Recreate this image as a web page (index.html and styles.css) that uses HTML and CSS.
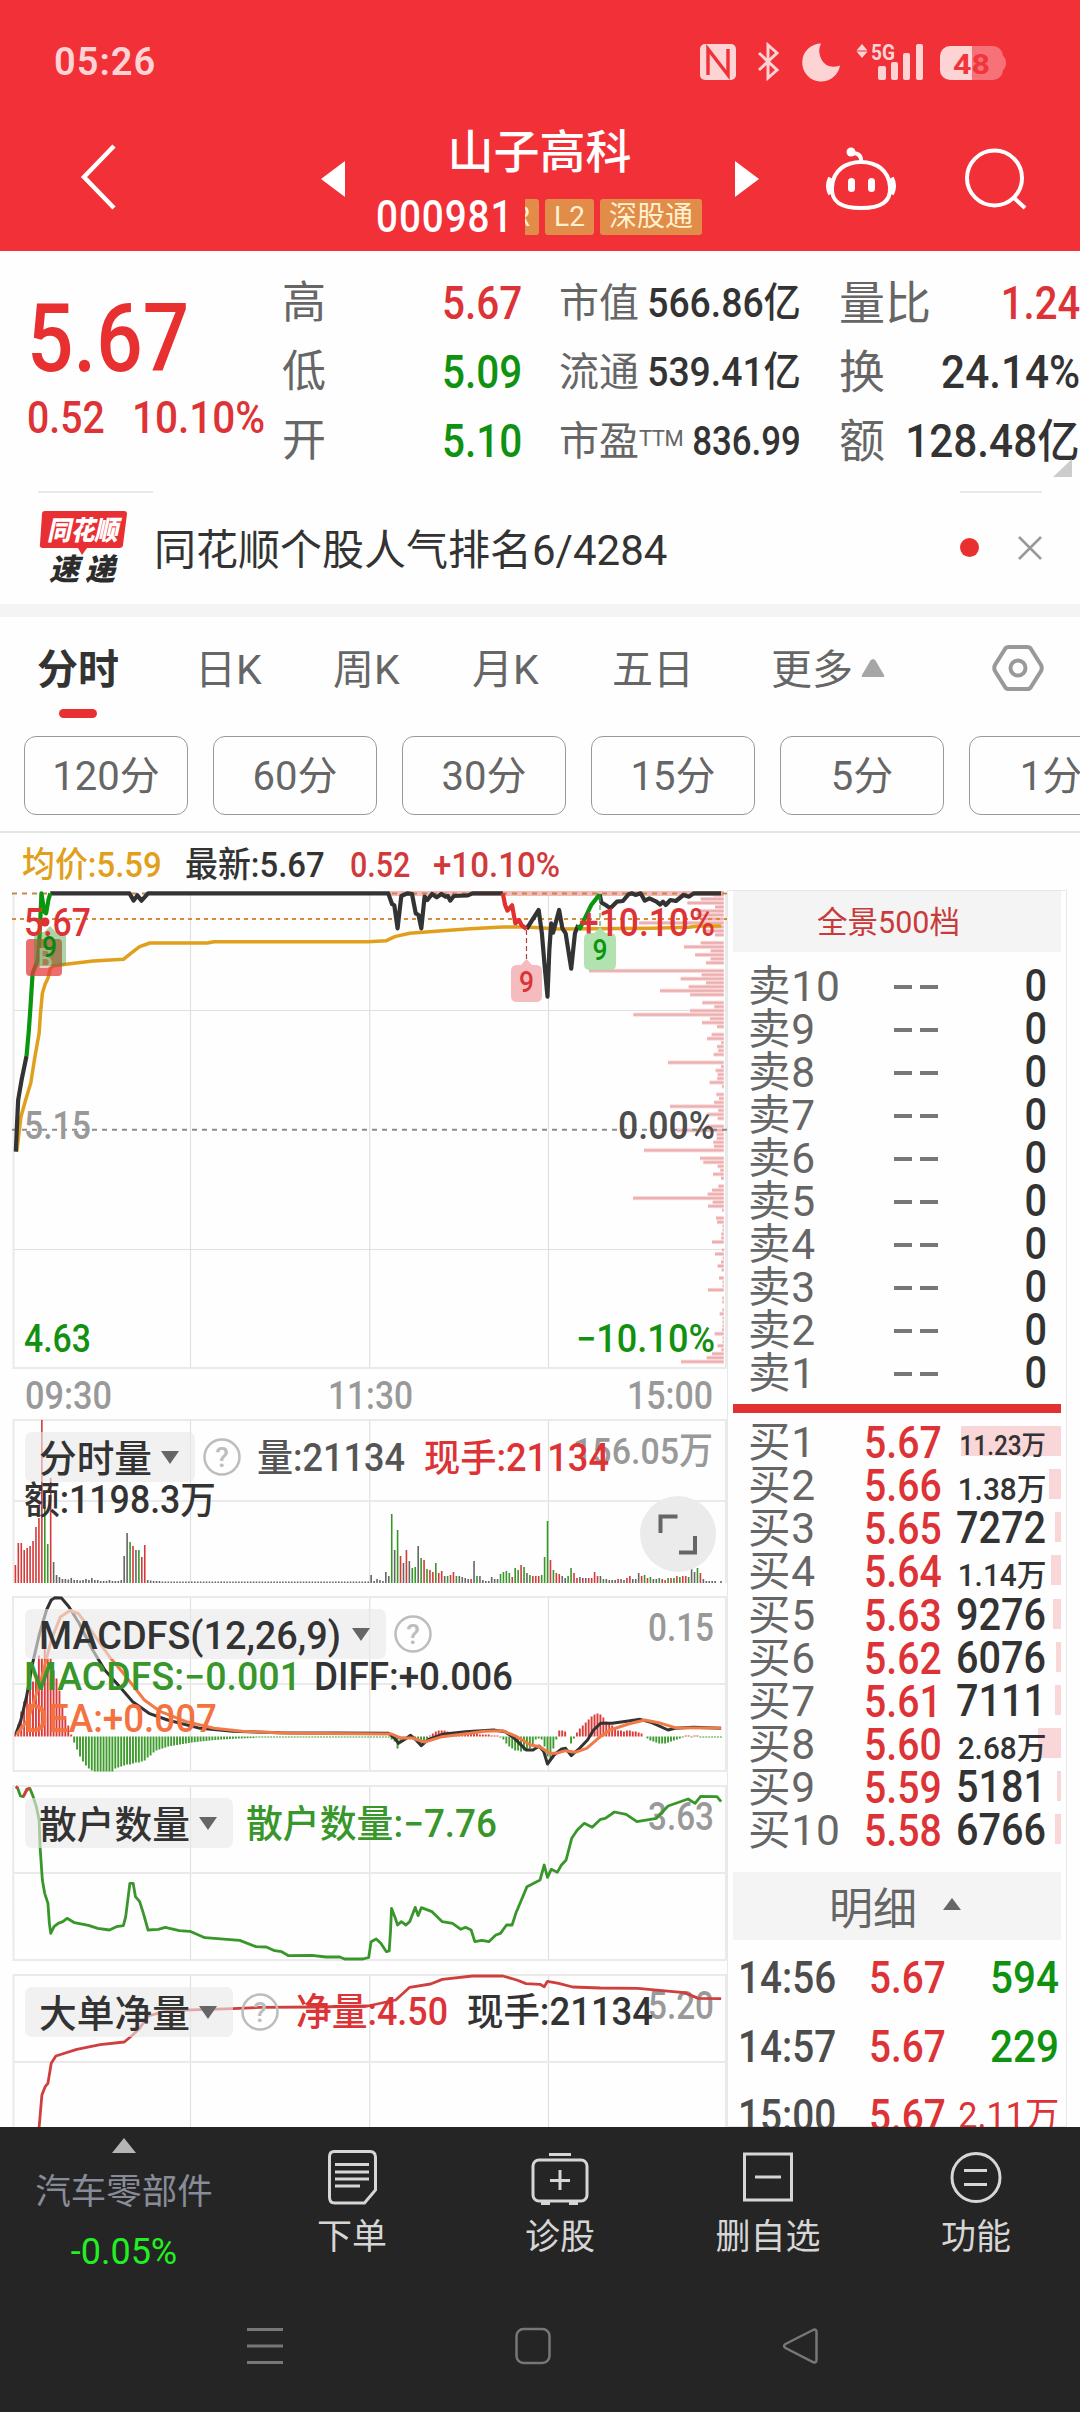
FILE: index.html
```html
<!DOCTYPE html>
<html lang="zh-CN">
<head>
<meta charset="utf-8">
<title>山子高科 000981</title>
<link rel="stylesheet" href="styles.css">
</head>
<body>
<header class="top">
  <div class="status">
    <span class="clock">05:26</span>
    <svg class="status-icons" width="310" height="44" viewBox="698 40 310 44">
      <g fill="#fdd3d4">
        <rect x="700" y="44" width="36" height="36" rx="5"/>
        <path d="M708 75V49L728 75V49" fill="none" stroke="#f13038" stroke-width="3.4"/>
        <path d="M759 53l18 17-9 8V45l9 8-18 17" fill="none" stroke="#fdd3d4" stroke-width="3"/>
        <path d="M821 43.500a19 19 0 1 0 19 22q-12 4-18-5-5-9-1-17z"/>
        <path d="M862 44l5.500 6.500h-11zM862 58l5.500-6.500h-11z"/>
        <rect x="878" y="66" width="8" height="14" rx="2"/><rect x="891" y="62" width="7" height="18" rx="2"/>
        <rect x="903" y="53" width="7" height="27" rx="2"/><rect x="916" y="44" width="7" height="36" rx="2"/>
        <text x="871" y="60" class="g5" textLength="24" lengthAdjust="spacingAndGlyphs">5G</text>
        <path d="M950 46h22v34h-22a10 10 0 0 1-10-10V56a10 10 0 0 1 10-10z"/>
        <path d="M972 46h21a10 10 0 0 1 10 10q3 2 3 7t-3 7a10 10 0 0 1-10 10h-21z" fill="#f67178"/>
        <text x="953" y="74" class="batt" textLength="37" lengthAdjust="spacingAndGlyphs">48</text>
      </g>
    </svg>
  </div>
  <div class="titlebar">
    <svg class="back" width="40" height="70" viewBox="0 0 40 70"><path d="M35 4L5 35l30 31" fill="none" stroke="#fff" stroke-width="4.500"/></svg>
    <svg class="prev" width="24" height="36" viewBox="0 0 24 36"><path d="M0 18L24 0v36z" fill="#fff"/></svg>
    <div class="name">
      <h1>山子高科</h1>
      <div class="code"><span class="din digits">000981</span><i class="tag cut">R</i><i class="tag l2">L2</i><i class="tag sgt">深股通</i></div>
    </div>
    <svg class="next" width="24" height="36" viewBox="0 0 24 36"><path d="M24 18L0 0v36z" fill="#fff"/></svg>
    <svg class="robot" width="70" height="66" viewBox="826 145 70 66">
      <g fill="none" stroke="#fff" stroke-width="4">
        <path d="M861 161c15 0 28 8 29 25 1 15-9 21-29 21s-30-6-29-21c1-17 14-25 29-25z"/>
        <path d="M861 161q1-9-9-9"/><path d="M831 177q-4 8 0 16M891 177q4 8 0 16" stroke-width="6"/>
      </g>
      <g fill="#fff"><circle cx="851" cy="151" r="4.500"/><rect x="848" y="177" width="7" height="14" rx="3.500"/><rect x="868" y="177" width="7" height="14" rx="3.500"/></g>
    </svg>
    <svg class="search" width="64" height="64" viewBox="963 146 64 64"><g fill="none" stroke="#fff" stroke-width="4"><circle cx="994.500" cy="177" r="27.500"/><path d="M1013 196l12 11"/></g></svg>
  </div>
</header>

<section class="quote">
  <div class="last">
    <b class="din">5.67</b>
    <p><span class="din">0.52</span><span class="din pct">10.10%</span></p>
  </div>
  <dl class="c2">
    <div><dt>高</dt><dd class="din red">5.67</dd></div>
    <div><dt>低</dt><dd class="din green">5.09</dd></div>
    <div><dt>开</dt><dd class="din green">5.10</dd></div>
  </dl>
  <dl class="c3">
    <div><dt>市值</dt><dd class="din">566.86亿</dd></div>
    <div><dt>流通</dt><dd class="din">539.41亿</dd></div>
    <div><dt>市盈<sup>TTM</sup></dt><dd class="din pe">836.99</dd></div>
  </dl>
  <dl class="c4">
    <div><dt>量比</dt><dd class="din ratio red">1.24</dd></div>
    <div><dt>换</dt><dd class="din">24.14%</dd></div>
    <div><dt>额</dt><dd class="din">128.48亿</dd></div>
  </dl>
  <i class="corner"></i>
</section>
<div class="hairs"><i></i><i></i></div>

<section class="news">
  <svg class="logo" width="92" height="78" viewBox="38 508 92 78">
    <path d="M45 511h79q3 0 3 3l-4 31q0 3-4 3H87l-5 7-4-7H43q-4 0-3-4l2-30q0-3 3-3z" fill="#e83034"/>
    <text x="47" y="540" class="logo-a" textLength="71" lengthAdjust="spacingAndGlyphs">同花顺</text>
    <text x="49" y="580" class="logo-b" textLength="66" lengthAdjust="spacing">速递</text>
  </svg>
  <span class="headline">同花顺个股人气排名6/4284</span>
  <i class="dot"></i>
  <svg class="close" width="26" height="26" viewBox="0 0 26 26"><path d="M2 2l22 22M24 2L2 24" stroke="#999" stroke-width="2.500"/></svg>
</section>

<nav class="tabs">
  <a class="on">分时</a><a>日K</a><a>周K</a><a>月K</a><a>五日</a>
  <a>更多<svg width="24" height="20" viewBox="0 0 24 20"><path d="M12 1q1.500 0 2.500 1.500L23 17q1 2-1 2H2q-2 0-1-2L9.500 2.500Q10.500 1 12 1z" fill="#a6a6a6"/></svg></a>
  <svg class="gear" width="52" height="50" viewBox="992 643 52 50"><g fill="none" stroke="#999" stroke-width="4"><path d="M1009 647h18q3 0 4 2l10 16q1.500 3 0 6l-10 16q-1 2-4 2h-18q-3 0-4-2l-10-16q-1.500-3 0-6l10-16q1-2 4-2z"/><circle cx="1018" cy="668" r="7.500"/></g></svg>
</nav>
<div class="periods"><a>120分</a><a>60分</a><a>30分</a><a>15分</a><a>5分</a><a>1分</a></div>

<main class="board">
  <div class="charts">
    <div class="info"><span class="avg">均价:5.59</span><span class="cur">最新:5.67</span><span class="chg">0.52</span><span class="rate">+10.10%</span></div>

    <svg class="chart" width="727" height="520" viewBox="0 890 727 520">
      <g class="grid"><path d="M190.500 893V1368M369.700 893V1368M548.500 893V1368M13 1010.500H727M13 1249.500H727"/><path class="frame" d="M13.500 893V1368H726V893"/></g>
      <rect x="388" y="891" width="336" height="5" fill="#f6b9b7"/>
      <g id="profile"></g>
      <path d="M12 893.500H727" stroke="#c08a4c" stroke-width="2" stroke-dasharray="5 5"/>
      <path d="M12 919H727" stroke="#d98a3c" stroke-width="2.200" stroke-dasharray="4 4"/>
      <path d="M12 1129.700H727" stroke="#8c8c8c" stroke-width="2" stroke-dasharray="5 5"/>
      <g class="curve" transform="translate(0 870) scale(.46555 .33333)">
        <polyline stroke="#e0a01c" stroke-width="3.500" points="36,845 45,740 55,690 66,640 75,560 84,490 87,430 91,370 97,342 103,325 108,295 115,287 150,281 200,273 265,268 283,248 300,230 322,219 445,219 460,215 790,215 830,212 848,200 880,190 950,182 1010,176 1080,171 1131,171 1200,177 1400,175 1480,172 1500,168 1549,168"/>
        <g stroke-width="4.200" stroke="#333">
        <polyline points="34,845 36,780 39,690 47,625 57,558"/>
        <polyline points="108,70 278,70 287,92 295,76 304,92 318,70 834,70 842,102 847,106 854,175 862,78 875,70 885,72 893,130 899,135 905,175 912,80 918,90 928,72 938,82 948,72 957,80 962,78 967,92 975,78 1005,76 1015,70 1080,70"/>
        <polyline points="1131,177 1157,120 1164,190 1170,290 1176,380 1180,240 1184,160 1188,188 1201,120 1208,175 1215,190 1227,296 1235,190 1242,165"/>
        <polyline points="1288,73 1292,98 1301,105 1311,115 1325,95 1338,93 1350,73 1358,70 1365,75 1376,70 1385,92 1395,85 1410,95 1418,104 1424,95 1430,105 1440,90 1452,93 1468,75 1480,80 1490,70 1549,70"/>
        <g stroke="#0a960e"><polyline points="57,558 62,480 66,400 70,310 82,268 86,170 89,70 95,125 99,130 104,90 108,70"/><polyline points="1242,165 1246,175 1258,140 1270,105 1288,73"/></g>
        <polyline stroke="#e03030" points="1080,70 1085,105 1090,122 1100,106 1107,160 1115,150 1120,165 1131,177"/>
        </g>
      </g>
      <circle cx="45" cy="922" r="4.500" fill="#e03030"/>
      <path d="M526.500 930V960" stroke="#b04040" stroke-width="1.200" stroke-dasharray="5 3"/>
      <path d="M600 897V927" stroke="#58a058" stroke-width="1.200" stroke-dasharray="5 3"/>
      <rect x="26" y="939" width="36" height="37" rx="4" fill="#e43c3c" opacity=".75"/>
      <text x="38" y="968" fill="#e8d0c8" font-size="27" textLength="15" lengthAdjust="spacingAndGlyphs">B</text>
      <path d="M38 932h6l6-6 6 6h6q4 0 4 4v26q0 4-4 4H38q-4 0-4-4v-26q0-4 4-4z" fill="#3d9a35" opacity=".42"/>
      <text x="42" y="957" fill="#0a860e" font-size="30" textLength="15" lengthAdjust="spacingAndGlyphs">9</text>
      <path d="M517 965h4l5.500-6 5.500 6h4q6 0 6 6v25q0 6-6 6h-19q-6 0-6-6v-25q0-6 6-6z" fill="#f4bcbe"/>
      <text x="519" y="992" fill="#dc3336" font-size="30" textLength="15" lengthAdjust="spacingAndGlyphs">9</text>
      <path d="M590 933h4.500l5.500-6 5.500 6h4.500q6 0 6 6v25q0 6-6 6h-20q-6 0-6-6v-25q0-6 6-6z" fill="#ade0ab" opacity=".95"/>
      <text x="592.500" y="960" fill="#0a960e" font-size="30" textLength="15" lengthAdjust="spacingAndGlyphs">9</text>
      <g font-size="38">
        <text x="24" y="935.500" fill="#dd3336" textLength="67" lengthAdjust="spacingAndGlyphs">5.67</text>
        <text x="579" y="935.500" fill="#dd3336" textLength="136" lengthAdjust="spacingAndGlyphs">+10.10%</text>
        <text x="24" y="1138.500" fill="#999" textLength="67" lengthAdjust="spacingAndGlyphs">5.15</text>
        <text x="618" y="1138.500" fill="#4d4d4d" textLength="97" lengthAdjust="spacingAndGlyphs">0.00%</text>
        <text x="24" y="1351.500" fill="#12900f" textLength="67" lengthAdjust="spacingAndGlyphs">4.63</text>
        <text x="576" y="1351.500" fill="#12900f" textLength="139" lengthAdjust="spacingAndGlyphs">−10.10%</text>
        <g fill="#999"><text x="25" y="1409" textLength="87" lengthAdjust="spacingAndGlyphs">09:30</text><text x="328" y="1409" textLength="85" lengthAdjust="spacingAndGlyphs">11:30</text><text x="627" y="1409" textLength="86" lengthAdjust="spacingAndGlyphs">15:00</text></g>
      </g>
    </svg>

    <svg class="chart" width="727" height="180" viewBox="0 1410 727 180">
      <g class="grid"><path d="M190.500 1420V1583M369.700 1420V1583M548.500 1420V1583"/><path class="frame" d="M13.500 1583V1420H727M726 1420V1583M13 1501H727"/></g>
      <text x="573" y="1464" font-size="37" fill="#999" textLength="140" lengthAdjust="spacingAndGlyphs">156.05万</text>
      <g id="volume"></g>
      <rect class="pill" x="25" y="1432" width="170" height="50" rx="7"/>
      <g font-size="38">
        <text x="39" y="1472" fill="#333" textLength="113" lengthAdjust="spacingAndGlyphs">分时量</text>
        <text x="257" y="1471" fill="#555" textLength="148" lengthAdjust="spacingAndGlyphs">量:21134</text>
        <text x="424" y="1471" fill="#dd3336" textLength="185" lengthAdjust="spacingAndGlyphs">现手:21134</text>
        <text x="24" y="1513" fill="#333" textLength="192" lengthAdjust="spacingAndGlyphs">额:1198.3万</text>
      </g>
      <path class="drop" d="M161 1451h18l-9 13z"/>
      <g class="help"><circle cx="222" cy="1457" r="17.500"/><text x="222" y="1467" text-anchor="middle">?</text></g>
      <circle cx="678" cy="1534" r="38" fill="#ebebeb"/>
      <path d="M660.500 1533v-16.500h17M695 1536v16.500h-16" fill="none" stroke="#666" stroke-width="4"/>
    </svg>

    <svg class="chart" width="727" height="190" viewBox="0 1590 727 190">
      <g class="grid"><path d="M190.500 1597V1771M369.700 1597V1771M548.500 1597V1771"/><path class="frame" d="M13 1597H726V1771H13.500zM13 1684H727"/></g>
      <g id="macd"></g>
      <g class="curve" stroke-width="3" transform="translate(0 1400) scale(.46555 .33333)">
        <polyline stroke="#333" points="34,1002 45,960 57,890 70,790 85,700 100,630 110,600 118,593 132,594 148,620 170,670 195,740 225,810 260,865 285,905 320,940 360,960 430,985 500,994 600,998 835,1000 848,1015 856,1030 870,1018 882,1006 895,1022 905,1037 920,1018 950,1003 1000,995 1060,990 1085,995 1105,1015 1130,1050 1145,1050 1158,1038 1168,1055 1176,1092 1190,1065 1205,1048 1215,1045 1227,1067 1245,1045 1262,1020 1275,990 1290,970 1315,970 1350,963 1375,958 1400,968 1435,990 1450,985 1490,982 1549,985"/>
        <polyline stroke="#f07a48" points="36,1002 60,960 90,830 110,720 130,650 150,632 168,640 195,690 235,770 265,820 310,900 345,935 400,965 460,985 520,994 620,1000 840,1002 860,1014 885,1014 912,1026 950,1010 1010,1000 1040,994 1080,992 1110,1010 1140,1035 1160,1040 1180,1060 1195,1060 1215,1052 1235,1057 1260,1045 1285,1015 1310,990 1350,972 1385,960 1420,970 1450,983 1549,984"/>
      </g>
      <rect class="pill" x="25" y="1609" width="361" height="50" rx="7"/>
      <g font-size="38">
        <text x="39" y="1649" fill="#333" textLength="302" lengthAdjust="spacingAndGlyphs">MACDFS(12,26,9)</text>
        <text x="24" y="1690" fill="#38962a" textLength="277" lengthAdjust="spacingAndGlyphs">MACDFS:−0.001</text>
        <text x="314" y="1690" fill="#333" textLength="199" lengthAdjust="spacingAndGlyphs">DIFF:+0.006</text>
        <text x="24" y="1732" fill="#f37240" textLength="193" lengthAdjust="spacingAndGlyphs">DEA:+0.007</text>
        <text x="648" y="1641" fill="#999" textLength="66" lengthAdjust="spacingAndGlyphs">0.15</text>
      </g>
      <path class="drop" d="M352 1628h18l-9 13z"/>
      <g class="help"><circle cx="413" cy="1634" r="17.500"/><text x="413" y="1644" text-anchor="middle">?</text></g>
    </svg>

    <svg class="chart" width="727" height="188" viewBox="0 1780 727 188">
      <g class="grid"><path d="M190.500 1786V1960M369.700 1786V1960M548.500 1786V1960"/><path class="frame" d="M13 1786H726V1960H13.500zM13 1873H727"/></g>
      <text x="648" y="1830" font-size="38" fill="#999" textLength="66" lengthAdjust="spacingAndGlyphs">3.63</text>
      <g class="curve" stroke-width="2.800" transform="translate(0 1770) scale(.46555 .33333)">
        <polyline stroke="#38962a" points="34,50 38,55 44,78 50,80 58,58 64,55 70,75 78,110 84,150 86,230 91,330 96,370 103,400 106,460 109,490 116,470 125,460 135,455 144,445 160,458 190,466 210,475 235,480 250,470 265,467 270,440 279,340 286,340 291,380 300,395 308,430 318,480 340,478 355,472 385,482 408,484 440,503 515,511 550,530 572,531 590,542 605,545 620,557 670,556 700,561 730,561 740,567 780,567 792,562 797,515 808,507 818,520 830,545 836,543 839,480 841,415 848,440 854,465 862,455 872,465 880,455 892,412 898,437 905,413 928,425 950,455 972,460 990,478 1000,472 1012,480 1020,515 1035,511 1050,515 1065,495 1075,490 1088,465 1100,465 1108,430 1120,390 1132,350 1160,330 1169,285 1176,322 1184,298 1197,307 1206,285 1216,270 1228,205 1240,180 1255,160 1272,172 1290,148 1300,145 1320,126 1345,133 1368,155 1410,145 1435,108 1478,87 1493,100 1505,79 1540,80 1549,95"/>
        <path stroke="#d93c38" d="M34 50l5 5M50 80L58 58l6-3"/>
      </g>
      <rect class="pill" x="25" y="1798" width="208" height="50" rx="7"/>
      <text x="39" y="1838" font-size="38" fill="#333" textLength="151" lengthAdjust="spacingAndGlyphs">散户数量</text>
      <text x="246" y="1837" font-size="38" fill="#38962a" textLength="251" lengthAdjust="spacingAndGlyphs">散户数量:−7.76</text>
      <path class="drop" d="M199 1817h18l-9 13z"/>
    </svg>

    <svg class="chart" width="727" height="159" viewBox="0 1968 727 159">
      <g class="grid"><path d="M190.500 1975V2130M369.700 1975V2130M548.500 1975V2130"/><path class="frame" d="M13 1975H726V2140H13.500V1975M13 2062H727"/></g>
      <text x="648" y="2019" font-size="38" fill="#999" textLength="66" lengthAdjust="spacingAndGlyphs">5.20</text>
      <g class="curve" stroke-width="2.800" transform="translate(0 1770) scale(.46555 .33333)">
        <polyline stroke="#cf3f3d" points="84,1072 90,975 97,950 103,940 110,880 120,858 165,838 215,824 267,816 285,795 300,775 318,738 360,722 500,716 560,712 680,711 790,708 850,690 880,652 925,642 950,628 1015,618 1080,618 1110,630 1130,641 1160,643 1169,650 1176,634 1200,640 1230,651 1290,654 1370,655 1440,664 1470,668 1500,685 1549,686"/>
      </g>
      <rect class="pill" x="25" y="1987" width="208" height="50" rx="7"/>
      <g font-size="38">
        <text x="39" y="2027" fill="#333" textLength="151" lengthAdjust="spacingAndGlyphs">大单净量</text>
        <text x="296" y="2025" fill="#dd3336" textLength="152" lengthAdjust="spacingAndGlyphs">净量:4.50</text>
        <text x="467" y="2025" fill="#333" textLength="186" lengthAdjust="spacingAndGlyphs">现手:21134</text>
      </g>
      <path class="drop" d="M199 2006h18l-9 13z"/>
      <g class="help"><circle cx="260" cy="2012" r="17.500"/><text x="260" y="2022" text-anchor="middle">?</text></g>
    </svg>
  </div>

  <aside class="depth">
    <div class="all">全景500档</div>
    <div class="asks" id="asks"></div>
    <div class="split"></div>
    <div class="bids" id="bids"></div>
    <div class="detail">明细<i></i></div>
    <div class="ticks">
      <p><span class="din t">14:56</span><span class="din p">5.67</span><span class="din q green">594</span></p>
      <p><span class="din t">14:57</span><span class="din p">5.67</span><span class="din q green">229</span></p>
      <p><span class="din t">15:00</span><span class="din p">5.67</span><span class="din q wan red">2.11万</span></p>
    </div>
  </aside>
</main>

<footer>
  <div class="actions">
    <div class="sector"><i></i><span>汽车零部件</span><em>-0.05%</em></div>
    <a><svg width="60" height="60" viewBox="322 2147 60 60"><g fill="none" stroke="#d6d6d6" stroke-width="3"><path d="M334 2151.500h36q5.500 0 5.500 6V2190l-11 13h-30q-5 0-5-6v-40q0-5.500 4.500-5.500z"/><path d="M335 2164.500h34M335 2172h34M335 2179h34M335 2186h25"/></g></svg><span>下单</span></a>
    <a><svg width="60" height="60" viewBox="529 2147 60 60"><g fill="none" stroke="#d6d6d6" stroke-width="3"><rect x="532" y="2160" width="54" height="41" rx="6"/><path d="M548 2154.500h22M549 2180.500h20M559 2170v20M540 2203.500h9M568 2203.500h9"/></g></svg><span>诊股</span></a>
    <a><svg width="60" height="60" viewBox="737 2147 60 60"><g fill="none" stroke="#d6d6d6" stroke-width="3"><rect x="743.500" y="2154" width="47" height="46"/><path d="M754 2177h26"/></g></svg><span>删自选</span></a>
    <a><svg width="60" height="60" viewBox="946 2147 60 60"><g fill="none" stroke="#d6d6d6" stroke-width="3"><circle cx="976" cy="2177.500" r="24"/><path d="M964 2170.500h23M964 2184.500h23"/></g></svg><span>功能</span></a>
  </div>
  <div class="sys">
    <svg width="36" height="38" viewBox="0 0 36 38"><path d="M0 2.500h36M0 19h36M0 35.500h36" stroke="#777" stroke-width="3"/></svg>
    <svg width="36" height="38" viewBox="0 0 36 38"><rect x="1.500" y="2" width="33" height="34" rx="7" fill="none" stroke="#777" stroke-width="2.500"/></svg>
    <svg width="36" height="38" viewBox="0 0 36 38"><path d="M31 3L3.500 17q-3 2 0 4L31 35q3.500 1.500 3.500-2V5q0-3.500-3.500-2z" fill="none" stroke="#777" stroke-width="2.500"/></svg>
  </div>
</footer>
<script src="charts.js"></script>
</body>
</html>
```
FILE: styles.css
```css
* { box-sizing: border-box; margin: 0; padding: 0; }
body {
  width: 1080px; height: 2412px; overflow: hidden;
  display: flex; flex-direction: column;
  background: #fefefe; color: #333;
  font-family: Roboto, "Noto Sans CJK SC", sans-serif;
}
i, em { font-style: normal; }
svg { display: block; flex: none; }
.din { display: inline-block; font-weight: 500; transform: scaleX(.88); transform-origin: left; white-space: nowrap; }
.red { color: #dd3336 !important; }
.green { color: #0f920f !important; }

.top { height: 251px; background: #f13038; color: #fff; flex: none; }
.status { height: 123px; display: flex; align-items: center; justify-content: space-between; padding: 0 72px 0 54px; }
.clock { font-size: 38px; font-weight: 600; color: #fdd3d4; letter-spacing: 1px; }
.g5 { font-size: 22px; font-weight: 700; }
.batt { font-size: 28px; font-weight: 700; fill: #f0353d; }
.titlebar { height: 112px; display: flex; align-items: center; }
.back { margin-left: 79px; margin-top: -4px; }
.prev { margin-left: 202px; }
.name { width: 325px; margin-left: 32px; }
.name h1 { font-size: 46px; font-weight: 500; line-height: 58px; text-align: center; }
.code { display: flex; height: 36px; margin-top: 18px; align-items: center; }
.digits { width: 149px; margin-left: -1px; font-size: 44px; letter-spacing: 1px; transform: scaleX(.88); }
.tag { height: 36px; line-height: 35px; border-radius: 3px; background: #e18c49; color: #fff1cf; font-size: 28px; text-align: center; overflow: hidden; flex: none; }
.cut { width: 14px; border-radius: 0 3px 3px 0; direction: rtl; padding-right: 9px; }
.l2 { width: 49px; margin-left: 6px; }
.sgt { width: 102px; margin-left: 6px; }
.next { margin-left: 33px; }
.robot { margin-left: 67px; }
.search { margin-left: 67px; }

.quote { position: relative; flex: none; height: 240px; padding: 18px 0 0 27px; display: grid; grid-template-columns: 255px 240px 241px 240px; }
.c3 { margin-left: 37px; width: 242px; }
.c4 { margin-left: 76px; width: 241px; }
.last b { display: block; font-size: 94px; line-height: 94px; color: #e83030; margin-top: 23px; transform: scaleX(.87); }
.last p { display: flex; margin-top: 7px; line-height: 50px; font-size: 45px; color: #dd3336; }
.last p .din:first-child { transform: scaleX(.87); }
.last .pct { margin-left: 16px; transform: scaleX(.9); }
dl > div { height: 69px; line-height: 69px; display: flex; justify-content: space-between; white-space: nowrap; }
dt { font-size: 44px; color: #666; }
.c4 dt { font-size: 46px; }
dd { font-size: 46px; color: #333; }
dd.din { transform-origin: right; margin-left: -30px; }
.c3 dt { font-size: 40px; }
.c3 dd { font-size: 41px; transform: scaleX(.91); }
.c3 dd.pe { transform: scaleX(.85); }
.c4 dd { transform: scaleX(.92); }
.c4 dd.ratio { transform: scaleX(.87); }
sup { font-size: 22px; vertical-align: 9px; line-height: 1; letter-spacing: -.5px; }
.corner { position: absolute; left: 1053px; top: 208px; border: solid transparent; border-width: 0 0 18px 19px; border-bottom-color: #ccc; }
.hairs { flex: none; height: 2px; display: flex; justify-content: space-between; padding: 0 38px; }
.hairs i { width: 115px; background: #e9e9e9; }
.hairs i + i { width: 82px; }

.news { flex: none; height: 124px; display: flex; align-items: center; padding-left: 38px; border-bottom: 13px solid #f4f4f4; }
.logo { margin-top: -3px; }
.logo-a { font-size: 27px; font-weight: 900; font-style: italic; fill: #fff; }
.logo-b { font-size: 30px; font-weight: 900; font-style: italic; fill: #2c2c2c; }
.headline { margin: -5px 0 0 24px; width: 806px; font-size: 42px; }
.dot { width: 19px; height: 19px; border-radius: 50%; background: #e83030; margin-top: -2px; }
.close { margin-left: 38px; margin-top: -2px; }

.tabs { flex: none; height: 118px; display: flex; padding: 17px 0 0 37px; line-height: 72px; font-size: 41px; color: #666; }
.tabs a { position: relative; white-space: nowrap; width: 139px; display: flex; }
.tabs a:nth-child(1) { width: 158px; }
.tabs a:nth-child(2) { width: 138px; }
.tabs a:nth-child(4) { width: 140px; }
.tabs a:nth-child(5) { width: 159px; }
.tabs a:nth-child(6) { width: 221px; }
.tabs a svg { margin: 24px 0 0 8px; }
.tabs .on { font-weight: 700; color: #333; }
.tabs .on::after { content: ""; position: absolute; left: 22px; top: 75px; width: 38px; height: 9px; border-radius: 5px; background: #e83030; }
.gear { margin-top: 9px; }
.periods { flex: none; height: 98px; display: flex; gap: 25px; padding: 1px 0 0 24px; border-bottom: 2px solid #e5e5e5; overflow: hidden; }
.periods a { flex: none; width: 164px; height: 79px; line-height: 80px; border: 1.500px solid #999; border-radius: 12px; text-align: center; font-size: 40px; color: #666; }

.board { flex: 1; min-height: 0; display: flex; overflow: hidden; }
.charts { width: 727px; flex: none; }
.info { height: 57px; line-height: 66px; font-size: 35px; font-weight: 500; display: flex; padding-left: 22px; white-space: nowrap; }
.info span { transform: scaleX(.94); transform-origin: left; flex: none; }
.info .avg { color: #e0a01c; width: 163px; }
.info .cur { width: 165px; }
.info .chg { color: #d13a3a; width: 83px; transform: scaleX(.87); }
.info .rate { color: #d13a3a; transform: scaleX(.945); }
.chart { font-weight: 500; }
.grid path { fill: none; stroke: #e0e0e0; stroke-width: 1.200; }
.grid .frame { stroke: #eaeaea; stroke-width: 2; }
.curve { fill: none; stroke-linejoin: round; }
.curve polyline, .curve path { vector-effect: non-scaling-stroke; }
.pill { fill: #e9e9e9; opacity: .62; }
.drop { fill: #666; }
.help circle { fill: none; stroke: #bdbdbd; stroke-width: 2.500; }
.help text { fill: #bdbdbd; font-size: 28px; }

.depth { width: 340px; margin-top: 57px; flex: none; border: 1px solid #e8e8e8; padding: 0 5px; }
.all { height: 61px; line-height: 63px; background: #f4f4f4; text-align: center; padding-right: 17px; font-size: 30.500px; color: #c93a3a; }
.asks { padding-top: 13px; height: 452px; }
.row { display: flex; align-items: center; position: relative; white-space: nowrap; padding-left: 15px; }
.row .lv { font-size: 42.500px; color: #666; width: 116px; flex: none; letter-spacing: .8px; }
.asks .row { height: 43.050px; line-height: 43.050px; }
.dash { margin-left: 30px; width: 18px; height: 4px; background: #777; box-shadow: 26px 0 #777; }
.row .qty { position: absolute; right: 15px; font-size: 44px; transform: scaleX(.9); transform-origin: right; }
.asks .qty { right: 14px; }
.split { height: 9px; background: #e33030; }
.bids { height: 459px; padding-top: 8px; }
.bids .row { height: 43.150px; line-height: 43.150px; }
.bids .din.price { font-size: 45px; color: #dd3336; transform: scaleX(.87); }
.bids .bar { position: absolute; right: 0; top: 5px; height: 30px; background: #f9d6d7; }
.bids .qty.wan { font-size: 31px; top: 4px; transform: scaleX(.96); }
.bids .qty.tiny { font-size: 27px; top: 4px; transform: scaleX(.9); }
.detail { height: 68px; line-height: 68px; background: #f4f4f4; font-size: 44px; color: #666; display: flex; padding: 7px 0 0 96px; align-items: center; }
.detail i { margin-left: 26px; border: solid transparent; border-width: 0 9px 12px; border-bottom-color: #666; margin-top: -11px; }
.ticks { padding-top: 3px; }
.ticks p { height: 69px; line-height: 71px; position: relative; font-size: 44px; display: flex; padding-left: 5px; }
.ticks .t { color: #4d4d4d; width: 131px; transform: scaleX(.88); }
.ticks .p { color: #dd3336; transform: scaleX(.88); }
.ticks .q { position: absolute; right: 2px; transform: scaleX(.92); transform-origin: right; }
.ticks .q.wan { font-size: 36px; transform: scaleX(.95); font-weight: 400; }

footer { flex: none; height: 285px; background: #252525; color: #d6d6d6; }
.actions { display: flex; height: 184px; }
.actions a { width: 208px; display: flex; flex-direction: column; align-items: center; padding-top: 20px; font-size: 35px; line-height: 50px; }
.actions a span { margin-top: 6px; }
.sector { width: 248px; display: flex; flex-direction: column; align-items: center; font-size: 35.500px; color: #888c99; }
.sector i { margin-top: 11px; border: solid transparent; border-width: 0 12.500px 15px; border-bottom-color: #b5b5b5; }
.sector span { line-height: 50px; margin-top: 14px; }
.sector em { line-height: 50px; margin-top: 10px; color: #22f022; font-size: 36px; }
.sys { display: flex; gap: 231.500px; padding: 16px 0 0 247px; }
```
FILE: charts.js
```js
const NS = 'http://www.w3.org/2000/svg';
const STEP = 2.94, X0 = 15.3;

function bar(id, x, y, w, h, fill) {
  const r = document.createElementNS(NS, 'rect');
  Object.entries({ x, y, width: w, height: h, fill }).forEach(([k, v]) => r.setAttribute(k, v));
  document.getElementById(id).appendChild(r);
}

// Turnover by price level, bar lengths in thirds of a pixel.
const profile = [31,69,109,26,81,81,71,254,31,61,26,0,69,119,39,86,39,53,0,404,66,129,53,105,191,101,0,64,28,101,271,41,65,20,0,36,50,8,20,16,30,0,167,8,24,18,19,42,5,0,22,14,29,161,16,49,18,0,51,141,21,21,31,29,239,0,71,61,18,10,32,8,0,16,35,48,272,33,47,5,0,23,20,3,3,7,7,35,0,5,26,3,8,18,6,0,14,3,3,47,0,4,4,0,4,12,3,3,3,5,27,3,3,18,7,35,51,128];
profile.forEach((v, k) => {
  if (!v) return;
  const y = 895 + k * 3.989, w = v / 3;
  bar('profile', 723.7 - w, y - 2, w, 4, '#fccfd0');
  bar('profile', 723.7 - w, y - 1, w, 2, '#e8b0b0');
});

// Minute volume: height plus direction (r up, g down, none flat).
const volume = {
  0: '18r 40r 40r 33r 35r 37r 42r 56r 65r 163r 76g 39g 105r 21 8 6 4 4 3.5 5 3 3 2.5 3 4 3 5 3 3 2 2 2 3 2 2 2 3 27 50 41g 37r 33 33g 26r 38r 3 2.5 2 2 2',
  121: '8 2 4 3 2 11 7 69g 33 53g 27r 20 33r 22 15g 16g 37 25g 23r 14g 13r 11r 20g 10r 12r 7 7g 8r 11r 7g 7 6 5 4 4r 22 7g 7 3 2 2 6 4 4 9g 11g 12g 10g 6r 15g 13g 18r 16g 10 8g 7r 7r 7r 8g 26g 62g 23r 13g 10r 9r 7 5 7g 15g 10r 5r 6 5r 5 5r 5r 11r 7r 7 4g 4 3 3 3 4r 4 3 5r 7r 4 4 10 7r 8g 5r 6g 4 4 5g 4r 3r 5g 5r 5g 7r 6g 7r 7r 6g 15 11 15g 10r 4 2 2 2 2 0 2'
};
const heights = Array(241).fill('1.5');
for (const start in volume) volume[start].split(' ').forEach((v, i) => { heights[+start + i] = v; });
heights.forEach((v, i) => {
  const h = parseFloat(v), c = v.endsWith('r') ? '#d43a3a' : v.endsWith('g') ? '#38962a' : '#666';
  bar('volume', X0 + i * STEP - 0.7, 1583 - h, 1.6, h, c);
});

// MACD histogram around the zero axis.
const macd = Array(241).fill(-1);
const put = (at, list) => list.forEach((v, i) => { macd[at + i] = v; });
put(0, [3,12,25,35,42,48,55,62,81,78,93,78,78,66,58,46,32,20,11,2,-6,-13,-20,-25,-29,-32,-34,-35,-35,-35,-35,-35,-35,-35,-32,-31,-30,-29,-28,-28,-27,-26,-26,-25,-24,-21,-19,-16,-14,-13,-12,-11,-10,-9.5,-9,-8.5,-8,-7.5,-7,-6.5,-6,-5.7,-5.4,-5,-4.7,-4.4,-4.1,-3.8,-3.5,-3.3,-3.1,-2.9,-2.7,-2.5,-2.3,-2.2,-2,-2,-1.8,-1.7,-1.6,-1.5]);
put(127, [-1,-3,-5,-12,-5,-3,-2,1,1,-2,-4,-7,-4,-2,1,3,5,6,6,6,5,4,3,2,2,2,2,3,3,3,3,2,2,2,2,1,1,1,-1,-3,-7,-10,-12,-14,-14,-15,-14,-13,-12,-8,-3,-2,-3,-10,-20,-24,-12,-3,6,6,5,0,-7,-2,4,8,11,14,17,20,22,23,22,19,15,13,11,9,6,6,5,6,6,5,5,4,3,0,-2,-4,-5,-6,-7,-7,-7,-6,-5,-4,-3,-2,-1,1,1,-1,1,1]);
macd.forEach((v, i) => bar('macd', X0 + i * STEP - 0.9, v > 0 ? 1736.5 - v : 1736.5, 1.9, Math.abs(v), v > 0 ? '#dd3a3a' : '#3f9c2e'));

document.getElementById('asks').innerHTML = [10,9,8,7,6,5,4,3,2,1]
  .map(n => `<div class="row"><span class="lv">卖${n}</span><i class="dash"></i><span class="din qty">0</span></div>`).join('');

const bids = [['5.67','11.23万',100],['5.66','1.38万',12],['5.65','7272',6],['5.64','1.14万',10],['5.63','9276',8],['5.62','6076',5],['5.61','7111',6],['5.60','2.68万',23],['5.59','5181',4],['5.58','6766',6]];
document.getElementById('bids').innerHTML = bids.map(([p, q, w], i) => {
  const size = q.endsWith('万') ? (q.length > 5 ? ' tiny' : ' wan') : '';
  return `<div class="row"><i class="bar" style="width:${w}px"></i><span class="lv">买${i + 1}</span><span class="din price">${p}</span><span class="din qty${size}">${q}</span></div>`;
}).join('');
```
